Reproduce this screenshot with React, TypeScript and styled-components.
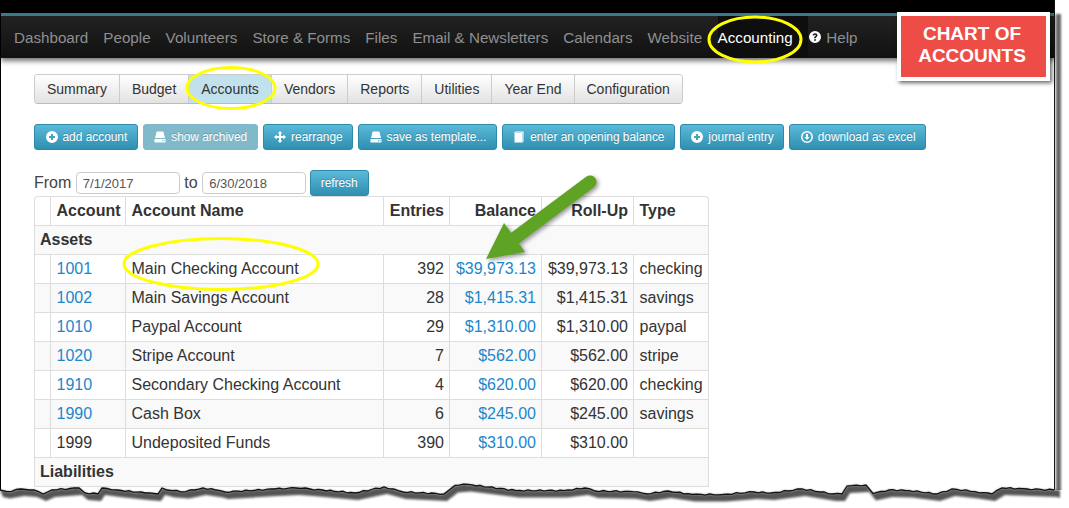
import React from 'react';
import styled, { createGlobalStyle } from 'styled-components';

const GlobalStyle = createGlobalStyle`
  html, body {
    margin: 0;
    padding: 0;
    background: #fff;
  }
  body {
    font-family: "Liberation Sans", Arial, sans-serif;
    color: #333;
  }
`;

const navItems = ['Dashboard', 'People', 'Volunteers', 'Store & Forms', 'Files', 'Email & Newsletters', 'Calendars', 'Website'];
const tabs = ['Summary', 'Budget', 'Accounts', 'Vendors', 'Reports', 'Utilities', 'Year End', 'Configuration'];
const colWidths = [15, 75, 258, 66, 92, 92, 77];

const groups = [
  {
    title: 'Assets',
    rows: [
      ['1001', 'Main Checking Account', '392', '$39,973.13', '$39,973.13', 'checking'],
      ['1002', 'Main Savings Account', '28', '$1,415.31', '$1,415.31', 'savings'],
      ['1010', 'Paypal Account', '29', '$1,310.00', '$1,310.00', 'paypal'],
      ['1020', 'Stripe Account', '7', '$562.00', '$562.00', 'stripe'],
      ['1910', 'Secondary Checking Account', '4', '$620.00', '$620.00', 'checking'],
      ['1990', 'Cash Box', '6', '$245.00', '$245.00', 'savings'],
      ['1999', 'Undeposited Funds', '390', '$310.00', '$310.00', ''],
    ],
  },
  { title: 'Liabilities', rows: [] as string[][] },
];

// torn paper edge, traced from the screenshot
const tornPoints: [number, number][] = [
  [0, 490], [7, 491.6], [21, 489], [34, 490], [43, 494], [52, 490], [79, 488], [85, 493], [98, 494], [102, 488],
  [117, 490], [145, 493], [158, 494], [162, 488], [172, 490.6], [186, 491.6], [203, 488], [220, 490.6], [225, 492],
  [275, 489], [296, 488], [310, 489], [355, 493], [384, 487], [403, 492], [444, 494], [455, 485.4], [468, 484.4],
  [516, 490.6], [564, 490.6], [585, 488], [595, 491], [633, 491.7], [647, 494], [668, 491], [692, 494.5], [723, 494.5],
  [754, 492], [771, 493], [802, 489], [833, 494], [842, 494], [847, 486], [866, 485], [873, 493.5], [889, 490],
  [909, 490.6], [937, 494], [952, 489], [975, 491.6], [992, 494], [1002, 488], [1027, 489], [1054, 490],
];

const roughen = (points: [number, number][]) => {
  const out: string[] = [];
  points.forEach(([x, y], i) => {
    out.push(`${x},${y}`);
    const next = points[i + 1];
    if (!next) return;
    const steps = Math.floor((next[0] - x) / 4);
    for (let s = 1; s < steps; s++) {
      const t = s / steps;
      const wobble = Math.sin(x * 1.7 + s * 2.3) * 0.7;
      out.push(`${(x + (next[0] - x) * t).toFixed(1)},${(y + (next[1] - y) * t + wobble).toFixed(1)}`);
    }
  });
  return out.join(' ');
};

const tornLine = roughen(tornPoints);

const PlusIcon = () => (
  <BtnSvg viewBox="0 0 12 12">
    <path fillRule="evenodd" fill="#fff" d="M6 0a6 6 0 1 0 0 12A6 6 0 0 0 6 0ZM5 3h2v2h2v2H7v2H5V7H3V5h2Z" />
  </BtnSvg>
);

const HddIcon = () => (
  <BtnSvg viewBox="0 0 12 12">
    <path fill="#fff" d="M2.6 .5h6.8L11 7H1Z" />
    <path fillRule="evenodd" fill="#fff" d="M.5 8h11v3.5H.5ZM8 9.3v1h1v-1Zm1.6 0v1h1v-1Z" />
  </BtnSvg>
);

const MoveIcon = () => (
  <BtnSvg viewBox="0 0 12 12">
    <path
      fill="#fff"
      d="M6 0l2.4 2.6H7V5h2.4V3.600L12 6 9.4 8.4V7H7v2.4h1.4L6 12 3.6 9.4H5V7H2.6v1.4L0 6l2.6-2.4V5H5V2.600H3.600Z"
    />
  </BtnSvg>
);

const BookIcon = () => (
  <BtnSvg viewBox="0 0 12 12">
    <path fill="#fff" d="M1.5 1.5 2.5.5h8v10l-.7 1H1.5Z" />
    <path fill="#7fbfd6" d="M9.2 1.5H2.5V2h6.7Zm0 .5h.5v9.5h-.5Z" />
  </BtnSvg>
);

const DownloadIcon = () => (
  <BtnSvg viewBox="0 0 12 12">
    <path
      fillRule="evenodd"
      fill="#fff"
      d="M6 0a6 6 0 1 0 0 12A6 6 0 0 0 6 0Zm0 1.5a4.5 4.5 0 1 1 0 9 4.5 4.5 0 0 1 0-9ZM5 3h2v3h1.6L6 9 3.4 6H5Z"
    />
  </BtnSvg>
);

const App: React.FC = () => (
  <Page>
    <GlobalStyle />
    <Screen>
      <TopBar />
      <Nav>
        {navItems.map((item) => (
          <NavItem key={item}>{item}</NavItem>
        ))}
        <ActiveNavItem>Accounting</ActiveNavItem>
        <HelpItem>
          <HelpSvg viewBox="0 0 12 12">
            <path
              fillRule="evenodd"
              fill="#fff"
              d="M6 0a6 6 0 1 0 0 12A6 6 0 0 0 6 0Zm-.8 8.2h1.7v1.5H5.2ZM3.6 4.3C3.8 3 4.8 2.3 6.1 2.3c1.4 0 2.4.8 2.4 2 0 .9-.5 1.4-1.1 1.8-.4.3-.5.5-.5 1.1H5.2c0-1 .2-1.5.9-2 .5-.3.7-.5.7-.8 0-.4-.3-.6-.7-.6-.5 0-.8.3-.8.8Z"
            />
          </HelpSvg>
          Help
        </HelpItem>
      </Nav>

      <Content>
        <TabGroup>
          {tabs.map((tab) => (
            <Tab key={tab} $active={tab === 'Accounts'}>
              {tab}
            </Tab>
          ))}
        </TabGroup>

        <Toolbar>
          <ActionButton><PlusIcon />add account</ActionButton>
          <ActionButton $muted><HddIcon />show archived</ActionButton>
          <ActionButton><MoveIcon />rearrange</ActionButton>
          <ActionButton><HddIcon />save as template...</ActionButton>
          <ActionButton><BookIcon />enter an opening balance</ActionButton>
          <ActionButton><PlusIcon />journal entry</ActionButton>
          <ActionButton><DownloadIcon />download as excel</ActionButton>
        </Toolbar>

        <DateRow>
          <DateLabel>From</DateLabel>
          <DateInput readOnly value="7/1/2017" />
          <DateLabel>to</DateLabel>
          <DateInput readOnly value="6/30/2018" />
          <RefreshButton>refresh</RefreshButton>
        </DateRow>

        <TableWrap>
          <Table>
            <colgroup>
              {colWidths.map((w, i) => (
                <Col key={i} $w={w} />
              ))}
            </colgroup>
            <thead>
              <tr>
                <Th />
                <Th>Account</Th>
                <Th>Account Name</Th>
                <Th $right>Entries</Th>
                <Th $right>Balance</Th>
                <Th $right>Roll-Up</Th>
                <Th>Type</Th>
              </tr>
            </thead>
            <tbody>
              {groups.map((group) => (
                <React.Fragment key={group.title}>
                  <tr>
                    <GroupCell colSpan={7}>{group.title}</GroupCell>
                  </tr>
                  {group.rows.map((row, i) => (
                    <Row key={row[0]} $striped={i % 2 === 1}>
                      <Td />
                      <Td>{row[0] === '1999' ? row[0] : <CellLink>{row[0]}</CellLink>}</Td>
                      <Td>{row[1]}</Td>
                      <Td $right>{row[2]}</Td>
                      <Td $right>
                        <CellLink>{row[3]}</CellLink>
                      </Td>
                      <Td $right>{row[4]}</Td>
                      <Td>{row[5]}</Td>
                    </Row>
                  ))}
                </React.Fragment>
              ))}
            </tbody>
          </Table>
        </TableWrap>
      </Content>
    </Screen>

    <Callout>
      CHART OF
      <br />
      ACCOUNTS
    </Callout>

    <Markup viewBox="0 0 1069 508">
      <ellipse cx="231" cy="88" rx="44" ry="20.5" fill="none" stroke="#ffff00" strokeWidth="3" />
      <ellipse cx="755" cy="39.5" rx="46" ry="22.5" fill="none" stroke="#ffff00" strokeWidth="3" />
      <ellipse cx="221" cy="264" rx="97" ry="25.5" fill="none" stroke="#ffff00" strokeWidth="3" />
      <ArrowGroup>
        <path d="M590 182 L515 238" stroke="#5fa324" strokeWidth="13" strokeLinecap="round" fill="none" />
        <path d="M486 259 L504 223 L525 252 Z" fill="#5fa324" />
      </ArrowGroup>
    </Markup>

    <TornEdge viewBox="0 470 1069 38">
      <polygon points={`0,508 ${tornLine} 1069,490 1069,508`} fill="#fff" />
      <ShadowBand points={`${tornLine} 1060,490 1060,498 ${tornPoints.map(([x, y]) => `${x + 3},${y + 7}`).reverse().join(' ')}`} />
      <polyline points={tornLine} fill="none" stroke="#111" strokeWidth="1.3" />
    </TornEdge>
  </Page>
);

export default App;

const Page = styled.div`
  position: relative;
  width: 1069px;
  height: 508px;
  overflow: hidden;
  background: #fff;
`;

const Screen = styled.div`
  position: relative;
  box-sizing: border-box;
  width: 1055px;
  height: 500px;
  background: #fff;
  border-left: 1px solid #000;
  border-right: 1.5px solid #111;

  &::after {
    content: '';
    position: absolute;
    top: 14px;
    right: -7px;
    bottom: 0;
    width: 5px;
    background: #666;
    filter: blur(1px);
  }
`;

const TopBar = styled.div`
  height: 13px;
  margin-left: -1px;
  background: #000;
`;

const Nav = styled.nav`
  display: flex;
  align-items: stretch;
  height: 42px;
  padding-left: 5.5px;
  border-top: 3px solid #38798a;
  background: linear-gradient(#222, #111);
  box-shadow: 0 3px 5px rgba(0, 0, 0, 0.55);
`;

const NavItem = styled.a`
  display: flex;
  align-items: center;
  padding: 0 7.5px;
  font-size: 15.2px;
  color: #8f8f8f;
  white-space: nowrap;
`;

const ActiveNavItem = styled(NavItem)`
  padding: 0 15px 0 0;
  margin-left: 8px;
  color: #fff;
  background: #0e0e0e;
`;

const HelpItem = styled(NavItem)`
  gap: 5px;
  padding-left: 1.5px;
`;

const HelpSvg = styled.svg`
  width: 12px;
  height: 12px;
`;

const Content = styled.div`
  padding: 16px 0 0 33px;
`;

const TabGroup = styled.div`
  display: inline-flex;
  height: 30px;
  box-sizing: border-box;
  border: 1px solid #ccc;
  border-bottom-color: #bbb;
  border-radius: 4px;
  overflow: hidden;
`;

const Tab = styled.div<{ $active?: boolean }>`
  display: flex;
  align-items: center;
  padding: 0 12px;
  font-size: 14px;
  color: #333;
  background: ${(p) => (p.$active ? '#c1e2ec' : 'linear-gradient(#fff, #e2e2e2)')};
  border-right: 1px solid #ccc;

  &:last-child {
    border-right: 0;
  }
`;

const Toolbar = styled.div`
  display: flex;
  gap: 4.9px;
  margin-top: 20px;
`;

const ActionButton = styled.div<{ $muted?: boolean }>`
  display: flex;
  align-items: center;
  gap: 5px;
  box-sizing: border-box;
  height: 26px;
  padding: 0 9.5px 0 10.5px;
  font-size: 11.9px;
  color: #fff;
  white-space: nowrap;
  border-radius: 3px;
  border: 1px solid ${(p) => (p.$muted ? '#7fb9ca' : '#2f89a8')};
  background: ${(p) => (p.$muted ? '#7fb9ca' : 'linear-gradient(#5bbad9, #2f8fb0)')};
  text-shadow: 0 -1px 0 rgba(0, 0, 0, 0.2);
`;

const BtnSvg = styled.svg`
  flex: none;
  width: 12px;
  height: 12px;
`;

const DateRow = styled.div`
  display: flex;
  align-items: center;
  height: 26px;
  margin-top: 20px;
`;

const DateLabel = styled.span`
  font-size: 16px;
  color: #444;
  margin-right: 4.5px;
`;

const DateInput = styled.input`
  box-sizing: border-box;
  width: 104px;
  height: 22px;
  margin-right: 4.5px;
  padding: 0 6px;
  font-family: inherit;
  font-size: 13px;
  color: #555;
  border: 1px solid #ccc;
  border-radius: 4px;
  background: #fff;
`;

const RefreshButton = styled(ActionButton)`
  margin-left: -1px;
  padding: 0 10px;
`;

const TableWrap = styled.div`
  width: 675px;
  box-sizing: border-box;
  border: 1px solid #ddd;
  border-bottom: 0;
  border-radius: 4px 4px 0 0;
  overflow: hidden;
`;

const Table = styled.table`
  width: 100%;
  table-layout: fixed;
  border-collapse: collapse;
  font-size: 16px;
`;

const Col = styled.col<{ $w: number }>`
  width: ${(p) => p.$w}px;
`;

const Th = styled.th<{ $right?: boolean }>`
  box-sizing: border-box;
  height: 28px;
  padding: 0 4.5px 0 6px;
  font-weight: bold;
  color: #333;
  white-space: nowrap;
  text-align: ${(p) => (p.$right ? 'right' : 'left')};
  border: 1px solid #ddd;
  border-top: 0;

  &:first-child {
    border-left: 0;
  }
  &:last-child {
    border-right: 0;
  }
`;

const GroupCell = styled.td`
  box-sizing: border-box;
  height: 29px;
  padding: 0 5px;
  font-weight: bold;
  background: #f9f9f9;
  border-top: 1px solid #ddd;
  border-bottom: 1px solid #ddd;
`;

const Row = styled.tr<{ $striped: boolean }>`
  background: ${(p) => (p.$striped ? '#f9f9f9' : '#fff')};
`;

const Td = styled.td<{ $right?: boolean }>`
  box-sizing: border-box;
  height: 29px;
  padding: 0 4.5px 0 6px;
  white-space: nowrap;
  color: #333;
  text-align: ${(p) => (p.$right ? 'right' : 'left')};
  border: 1px solid #ddd;

  &:first-child {
    border-left: 0;
  }
  &:last-child {
    border-right: 0;
  }
`;

const CellLink = styled.a`
  color: #1b87cb;
`;

const Callout = styled.div`
  position: absolute;
  top: 12px;
  left: 897px;
  box-sizing: border-box;
  width: 153px;
  height: 69px;
  padding: 0 3px 3px 0;
  display: flex;
  align-items: center;
  justify-content: center;
  text-align: center;
  font-size: 19px;
  line-height: 22px;
  font-weight: bold;
  color: #fff;
  background: #ee4c47;
  border: 4px solid #fff;
  box-shadow: 2px 2px 4px rgba(0, 0, 0, 0.6);
`;

const Markup = styled.svg`
  position: absolute;
  top: 0;
  left: 0;
  width: 1069px;
  height: 508px;
  pointer-events: none;
`;

const ArrowGroup = styled.g`
  filter: drop-shadow(2px 2px 2px rgba(0, 0, 0, 0.4));
`;

const TornEdge = styled.svg`
  position: absolute;
  left: 0;
  bottom: 0;
  width: 1069px;
  height: 38px;
`;

const ShadowBand = styled.polygon`
  fill: #555;
  filter: blur(1px);
`;
